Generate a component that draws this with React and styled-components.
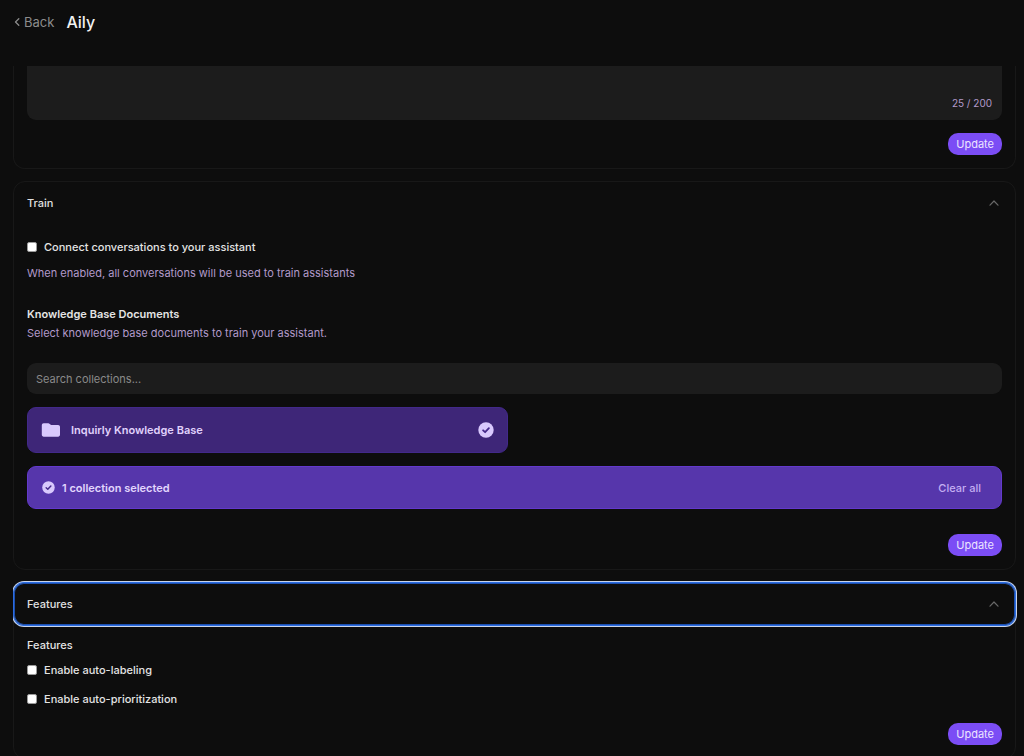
import React, { useState } from "react";
import styled, { createGlobalStyle } from "styled-components";

const Global = createGlobalStyle`
  *, *::before, *::after { box-sizing: border-box; }
  html, body { height: 100%; }
  body {
    margin: 0;
    background: #0d0d0d;
    color: #e4e4e4;
    font-family: Inter, "Liberation Sans", sans-serif;
    font-size: 11px;
    line-height: 16px;
    overflow: hidden;
  }
  button, input, textarea { font: inherit; color: inherit; }
  h1, h2, h3, p { margin: 0; font-size: inherit; font-weight: inherit; }
`;

const Page = styled.div`
  display: flex;
  flex-direction: column;
  height: 100vh;
`;

const TopBar = styled.header`
  display: flex;
  flex: none;
  align-items: center;
  gap: 12px;
  height: 44px;
  margin-bottom: 22px;
  padding: 0 14px;
`;

const BackLink = styled.a`
  display: flex;
  align-items: center;
  gap: 4px;
  color: #8c8c8c;
  font-size: 13px;
  text-decoration: none;
`;

const Title = styled.h1`
  && { font-size: 16px; font-weight: 500; }
  color: #f2f2f2;
  line-height: 24px;
`;

const Scroller = styled.main`
  display: flex;
  flex: 1;
  flex-direction: column;
  gap: 12px;
  min-height: 0;
  margin-left: 13px;
  overflow: hidden;
  padding-right: 8px;
`;

const Card = styled.section`
  flex: none;
  border: 1px solid #181818;
  border-top-width: ${(p) => (p.$continued ? 0 : 1)}px;
  border-radius: ${(p) => (p.$continued ? "0 0 12px 12px" : "12px")};
`;

const CardHeader = styled.button`
  display: flex;
  align-items: center;
  justify-content: space-between;
  width: 100%;
  height: 42px;
  padding: 0 15px 0 13px;
  border: 0;
  border-radius: 10px;
  background: transparent;
  color: #e0e0e0;
  font-weight: 500;
  outline: none;
  box-shadow: ${(p) => (p.$focused ? "inset 0 0 0 1px #1c4fae, 0 0 0 1px #2b6be0, 0 0 0 2px #c8d4ea" : "none")};
`;

const CardBody = styled.div`
  display: flex;
  flex-direction: column;
  padding: ${(p) => p.$top}px 13px 13px;
`;

const TextBox = styled.div`
  position: relative;
  height: 54px;
`;

const TextArea = styled.textarea`
  display: block;
  width: 100%;
  height: 100%;
  padding: 9px;
  border: 0;
  border-radius: 0 0 9px 9px;
  background: #1c1c1c;
  outline: none;
  resize: none;
`;

const Counter = styled.span`
  position: absolute;
  right: 10px;
  bottom: 9px;
  color: #b29aca;
  font-size: 10px;
`;

const Actions = styled.div`
  display: flex;
  justify-content: flex-end;
  margin-top: ${(p) => p.$gap}px;
`;

const UpdateButton = styled.button`
  height: 22px;
  padding: 0 8px;
  border: 0;
  border-radius: 10px;
  background: #7b4df5;
  color: #ece4ff;
  line-height: 22px;
`;

const CheckRow = styled.label`
  display: flex;
  align-items: center;
  gap: 7px;
  font-weight: 500;
`;

const CheckBox = styled.input`
  appearance: none;
  width: 10px;
  height: 10px;
  margin: 0;
  border: 1px solid #9a9a9a;
  border-radius: 2px;
  background: #ffffff;
  &:checked { background: #7b4df5; }
`;

const CheckList = styled.div`
  display: flex;
  flex-direction: column;
  gap: 13px;
  margin-top: 9px;
`;

const Hint = styled.p`
  margin-top: ${(p) => p.$gap}px;
  color: #b29aca;
`;

const Heading = styled.h3`
  && { font-weight: ${(p) => (p.$strong ? 600 : 500)}; }
  margin-top: ${(p) => p.$gap || 0}px;
`;

const SearchBox = styled.input`
  width: 100%;
  height: 31px;
  margin-top: 22px;
  padding: 0 9px;
  border: 0;
  border-radius: 9px;
  background: #1c1c1c;
  outline: none;
  &::placeholder { color: #8a8a8a; opacity: 1; }
`;

const Collections = styled.div`
  display: grid;
  grid-template-columns: 1fr 1fr;
  gap: 13px;
  margin-top: 13px;
`;

const Collection = styled.button`
  display: flex;
  align-items: center;
  gap: 10px;
  height: 46px;
  padding: 0 13px;
  border: 1px solid #42298a;
  border-radius: 9px;
  background: #3e2678;
  color: #e0d2fc;
  font-weight: 600;
  text-align: left;
`;

const CollectionName = styled.span`
  flex: 1;
`;

const Summary = styled.div`
  display: flex;
  align-items: center;
  gap: 7px;
  height: 43px;
  margin-top: 13px;
  padding: 0 20px 0 14px;
  border: 1px solid #6339cc;
  border-radius: 9px;
  background: #5636ab;
  color: #e2d6fd;
  font-weight: 600;
`;

const ClearButton = styled.button`
  margin-left: auto;
  padding: 0;
  border: 0;
  background: none;
  color: #c4aef2;
  font-weight: 500;
`;

const Icon = styled.svg`
  display: block;
  flex: none;
`;

const BackIcon = () => (
  <Icon width="6" height="10" viewBox="0 0 6 10" fill="none" stroke="currentColor" strokeWidth="1.3" strokeLinecap="round" strokeLinejoin="round" aria-hidden="true">
    <path d="M4.8 1.8 1.5 5l3.3 3.2" />
  </Icon>
);

const ChevronUp = () => (
  <Icon width="12" height="12" viewBox="0 0 12 12" fill="none" stroke="#686868" strokeWidth="1.2" strokeLinecap="round" strokeLinejoin="round" aria-hidden="true">
    <path d="M2 8.2 6 4l4 4.200" />
  </Icon>
);

const FolderIcon = () => (
  <Icon width="20" height="16" viewBox="0 0 20 16" fill="#d9c9fd" aria-hidden="true">
    <path d="M.8 3.200c0-1.100.8-1.900 1.900-1.900h4.500c.6 0 1.100.2 1.500.6l.7.7c.2.2.5.3.8.3h6.900c1.100 0 1.900.8 1.900 1.900v8c0 1.100-.8 1.900-1.900 1.900H2.700c-1.100 0-1.900-.8-1.900-1.900z" />
  </Icon>
);

const CheckCircle = ({ size }) => (
  <Icon width={size} height={size} viewBox="0 0 16 16" aria-hidden="true">
    <circle cx="8" cy="8" r="7.700" fill="#d9c9fd" />
    <path d="m5.100 8.300 2 1.900 3.800-4" fill="none" stroke="#45298a" strokeWidth="1.800" strokeLinecap="round" strokeLinejoin="round" />
  </Icon>
);

function Option({ label }) {
  return (
    <CheckRow>
      <CheckBox type="checkbox" />
      {label}
    </CheckRow>
  );
}

function Update({ gap }) {
  return (
    <Actions $gap={gap}>
      <UpdateButton type="button">Update</UpdateButton>
    </Actions>
  );
}

export default function App() {
  const [query, setQuery] = useState("");
  return (
    <Page>
      <Global />
      <TopBar>
        <BackLink href="#"><BackIcon />Back</BackLink>
        <Title>Aily</Title>
      </TopBar>
      <Scroller>
        <Card $continued>
          <CardBody $top={0}>
            <TextBox>
              <TextArea aria-label="Description" />
              <Counter>25 / 200</Counter>
            </TextBox>
            <Update gap={13} />
          </CardBody>
        </Card>

        <Card>
          <CardHeader type="button" aria-expanded="true">Train<ChevronUp /></CardHeader>
          <CardBody $top={15}>
            <Option label="Connect conversations to your assistant" />
            <Hint $gap={10}>When enabled, all conversations will be used to train assistants</Hint>
            <Heading $strong $gap={25}>Knowledge Base Documents</Heading>
            <Hint $gap={3}>Select knowledge base documents to train your assistant.</Hint>
            <SearchBox
              type="text"
              aria-label="Search collections"
              placeholder="Search collections..."
              value={query}
              onChange={(e) => setQuery(e.target.value)}
            />
            <Collections>
              <Collection type="button" aria-pressed="true">
                <FolderIcon />
                <CollectionName>Inquirly Knowledge Base</CollectionName>
                <CheckCircle size={16} />
              </Collection>
            </Collections>
            <Summary>
              <CheckCircle size={13} />
              1 collection selected
              <ClearButton type="button">Clear all</ClearButton>
            </Summary>
            <Update gap={25} />
          </CardBody>
        </Card>

        <Card>
          <CardHeader type="button" aria-expanded="true" $focused>Features<ChevronUp /></CardHeader>
          <CardBody $top={12}>
            <Heading>Features</Heading>
            <CheckList>
              <Option label="Enable auto-labeling" />
              <Option label="Enable auto-prioritization" />
            </CheckList>
            <Update gap={16} />
          </CardBody>
        </Card>
      </Scroller>
    </Page>
  );
}
